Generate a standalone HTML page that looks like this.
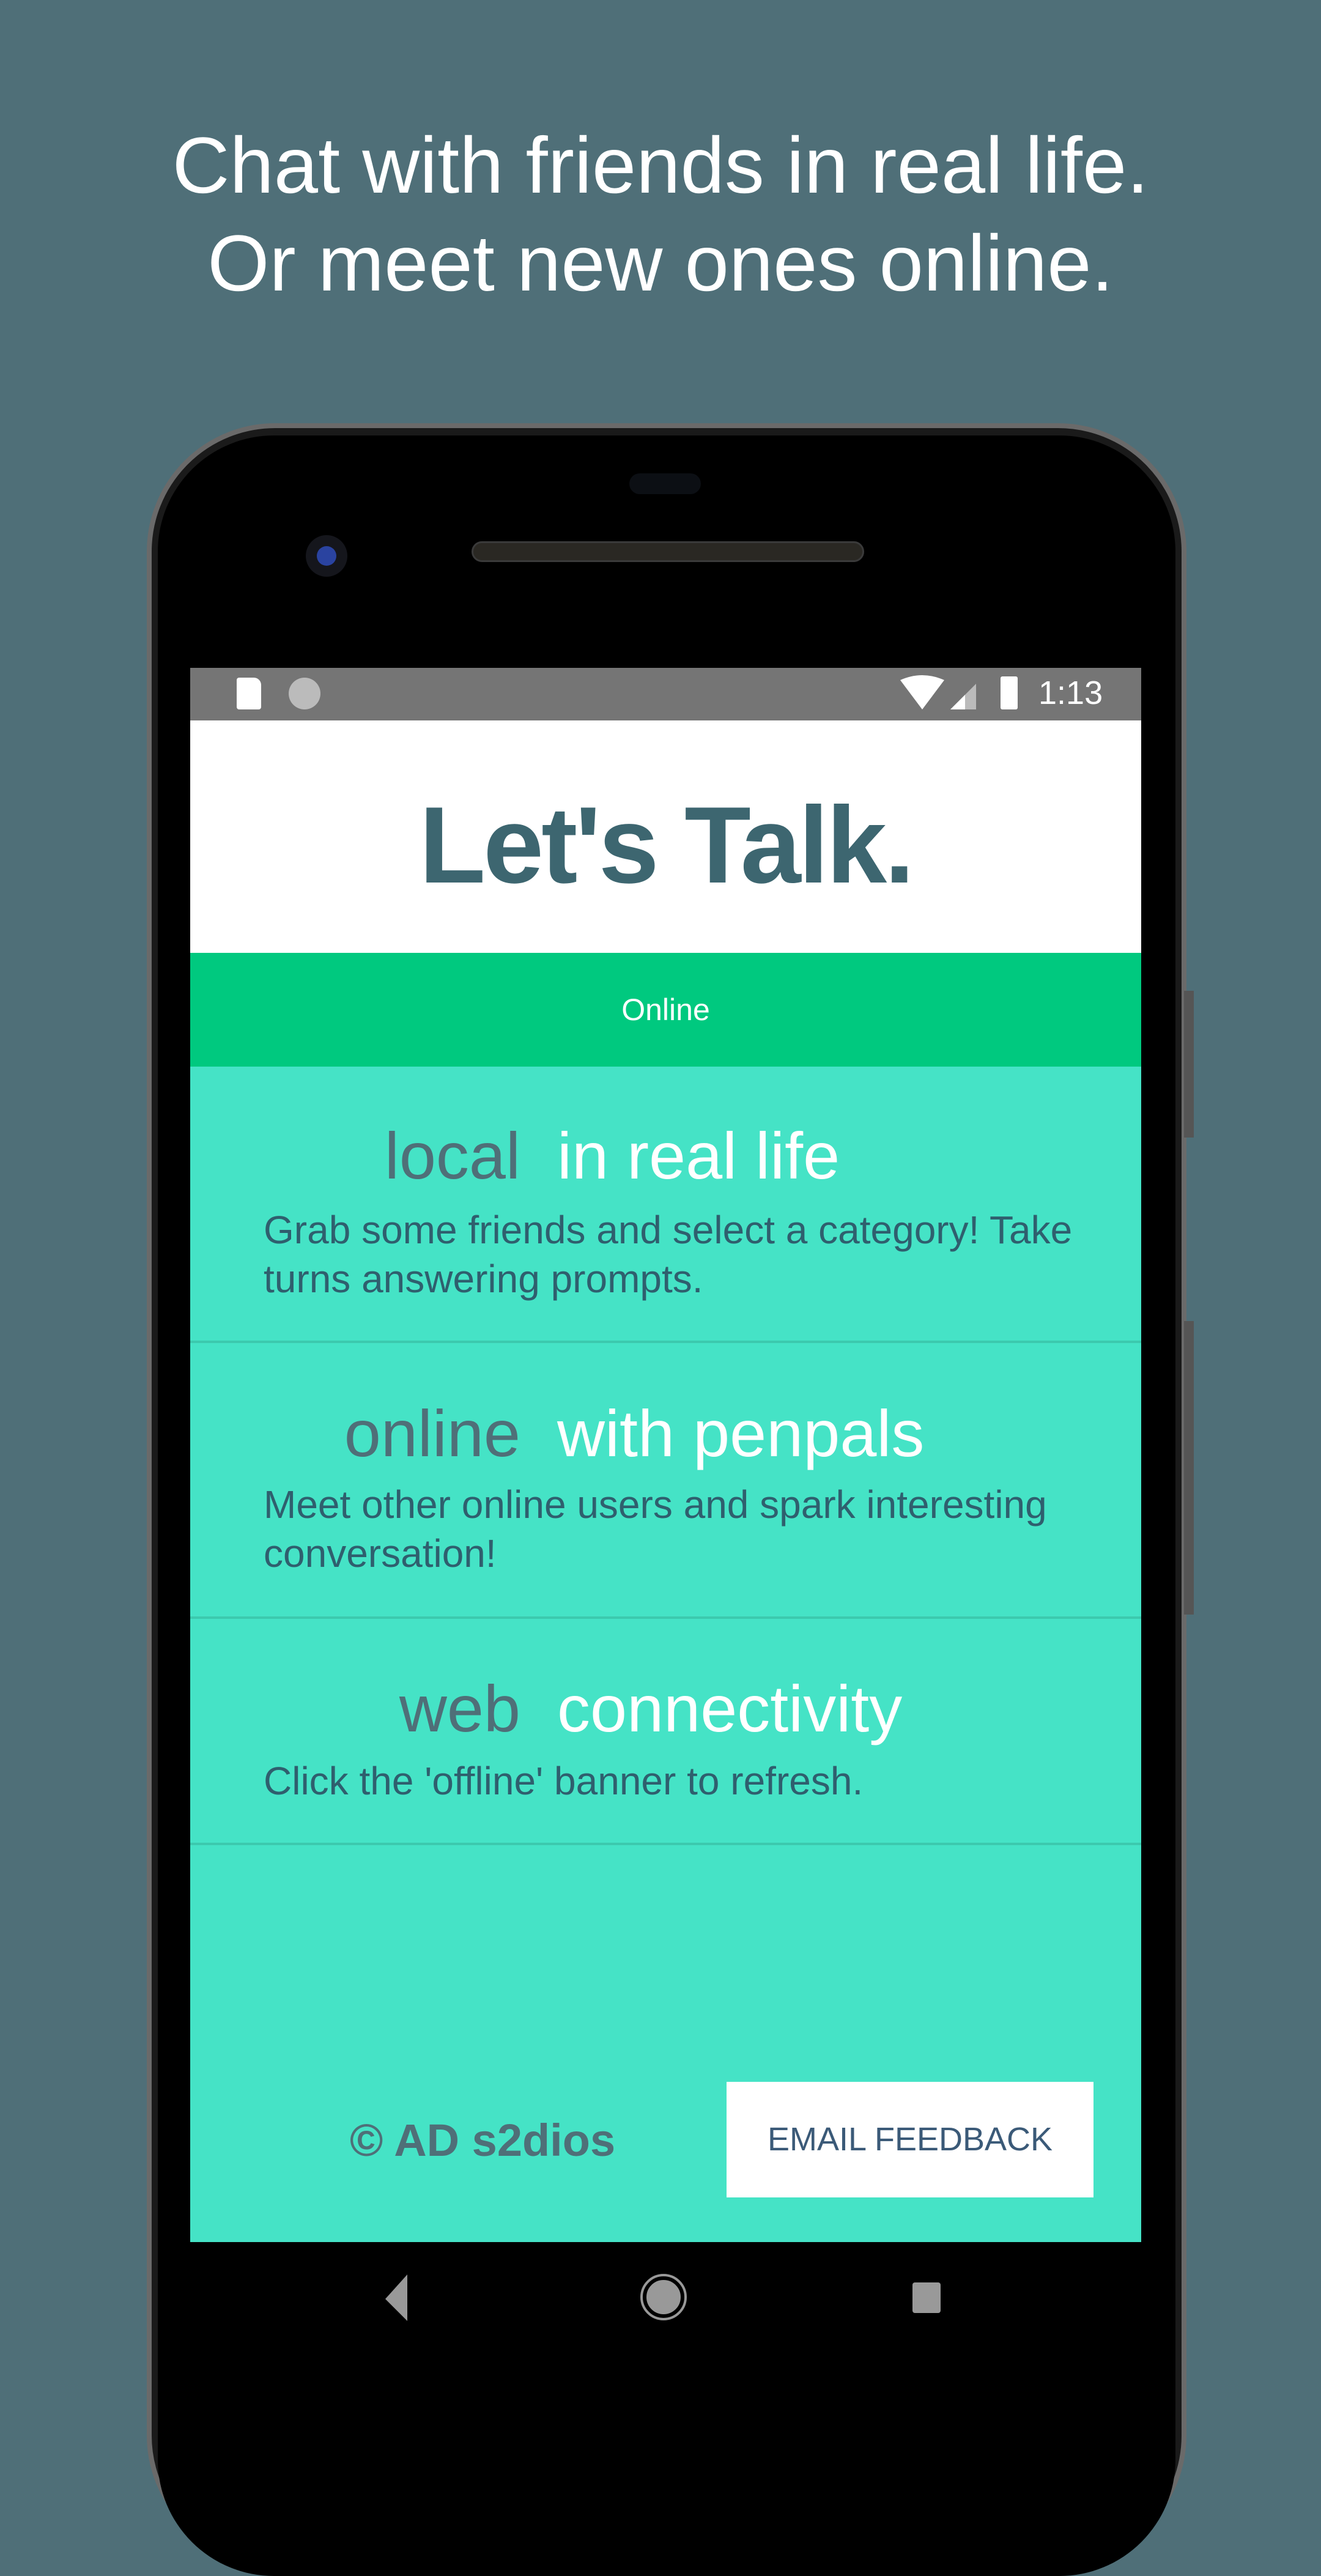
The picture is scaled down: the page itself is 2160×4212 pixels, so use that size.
<!DOCTYPE html>
<html><head><meta charset="utf-8"><style>
*{margin:0;padding:0;box-sizing:border-box}
body{width:2160px;height:3840px;background:#4f6f78;position:relative;overflow:hidden;font-family:"Liberation Sans",sans-serif}
.a{position:absolute}
.h{color:#fff;font-size:130px;font-weight:300;width:100%;text-align:center;left:0;line-height:160px}
.sep{left:311px;width:1555px;height:4px;background:#3cc9ae}
.tl{font-size:108px;line-height:130px;color:#4f6f78;text-align:right;width:540px;left:311px}
.tr{font-size:108px;line-height:130px;color:#fff;left:911px}
.d{font-size:64px;line-height:80px;color:#2f5f6e;left:431px;width:1420px}
</style></head><body>
<div class="a h" style="top:190px">Chat with friends in real life.</div>
<div class="a h" style="top:350px">Or meet new ones online.</div>
<div class="a" style="left:240px;top:692px;width:1700px;height:3500px;background:#1a1a1a;border-radius:210px;border:8px solid #6a6a6a"></div>
<div class="a" style="left:258px;top:712px;width:1664px;height:3500px;background:#000;border-radius:190px"></div>
<div class="a" style="left:1936px;top:1620px;width:16px;height:240px;background:#555"></div>
<div class="a" style="left:1936px;top:2160px;width:16px;height:480px;background:#555"></div>
<div class="a" style="left:1029px;top:774px;width:117px;height:34px;background:#0c0f14;border-radius:17px"></div>
<div class="a" style="left:771px;top:885px;width:642px;height:34px;background:#2a2823;border-radius:17px;border:3px solid #3a3a3a"></div>
<div class="a" style="left:500px;top:875px;width:68px;height:68px;background:#15161c;border-radius:50%"></div>
<div class="a" style="left:518px;top:893px;width:32px;height:32px;background:#2a43a0;border-radius:50%"></div>
<div class="a" style="left:311px;top:1092px;width:1555px;height:86px;background:#757575"></div>
<div class="a" style="left:387px;top:1108px;width:40px;height:52px;background:#fff;border-radius:4px 12px 4px 4px"></div>
<div class="a" style="left:472px;top:1108px;width:52px;height:52px;background:#bbb;border-radius:50%"></div>
<svg class="a" style="left:1470px;top:1104px" width="150" height="62"><path d="M2 8 Q38 -8 74 8 L38 56 Z" fill="#fff"/><path d="M84 56 L126 14 L126 56 Z" fill="#bbb"/><path d="M84 56 L108 32 L108 56Z" fill="#fff"/></svg>
<div class="a" style="left:1636px;top:1106px;width:28px;height:54px;background:#fff;border-radius:3px"></div>
<div class="a" style="left:1698px;top:1098px;font-size:54px;color:#fff;line-height:70px">1:13</div>
<div class="a" style="left:311px;top:1178px;width:1555px;height:380px;background:#fff"></div>
<div class="a" style="left:311px;top:1272px;width:1555px;text-align:center;font-size:178px;font-weight:bold;color:#3d6670;line-height:220px;letter-spacing:-4px">Let's Talk.</div>
<div class="a" style="left:311px;top:1558px;width:1555px;height:186px;background:#00c97f;color:#fff;font-size:50px;text-align:center;line-height:186px">Online</div>
<div class="a" style="left:311px;top:1744px;width:1555px;height:1922px;background:#45e3c6"></div>
<div class="a tl" style="top:1825px">local</div><div class="a tr" style="top:1825px">in real life</div>
<div class="a d" style="top:1971px">Grab some friends and select a category! Take turns answering prompts.</div>
<div class="a sep" style="top:2192px"></div>
<div class="a tl" style="top:2279px">online</div><div class="a tr" style="top:2279px">with penpals</div>
<div class="a d" style="top:2420px">Meet other online users and spark interesting conversation!</div>
<div class="a sep" style="top:2643px"></div>
<div class="a tl" style="top:2729px">web</div><div class="a tr" style="top:2729px">connectivity</div>
<div class="a d" style="top:2872px">Click the 'offline' banner to refresh.</div>
<div class="a sep" style="top:3013px"></div>
<div class="a" style="left:489px;top:3455px;width:600px;text-align:center;font-size:74px;font-weight:bold;color:#4f6f78;line-height:90px">© AD s2dios</div>
<div class="a" style="left:1188px;top:3404px;width:600px;height:189px;background:#fff;color:#3b5a78;font-size:54px;text-align:center;line-height:189px;font-weight:300">EMAIL FEEDBACK</div>
<svg class="a" style="left:620px;top:3715px" width="60" height="84"><path d="M46 4 L46 80 L10 44 Z" fill="#999"/></svg>
<div class="a" style="left:1051px;top:3722px;width:68px;height:68px;border-radius:50%;background:#999;border:6px solid #000;outline:4px solid #999"></div>
<div class="a" style="left:1492px;top:3732px;width:46px;height:50px;background:#999;border-radius:4px"></div>
</body></html>
